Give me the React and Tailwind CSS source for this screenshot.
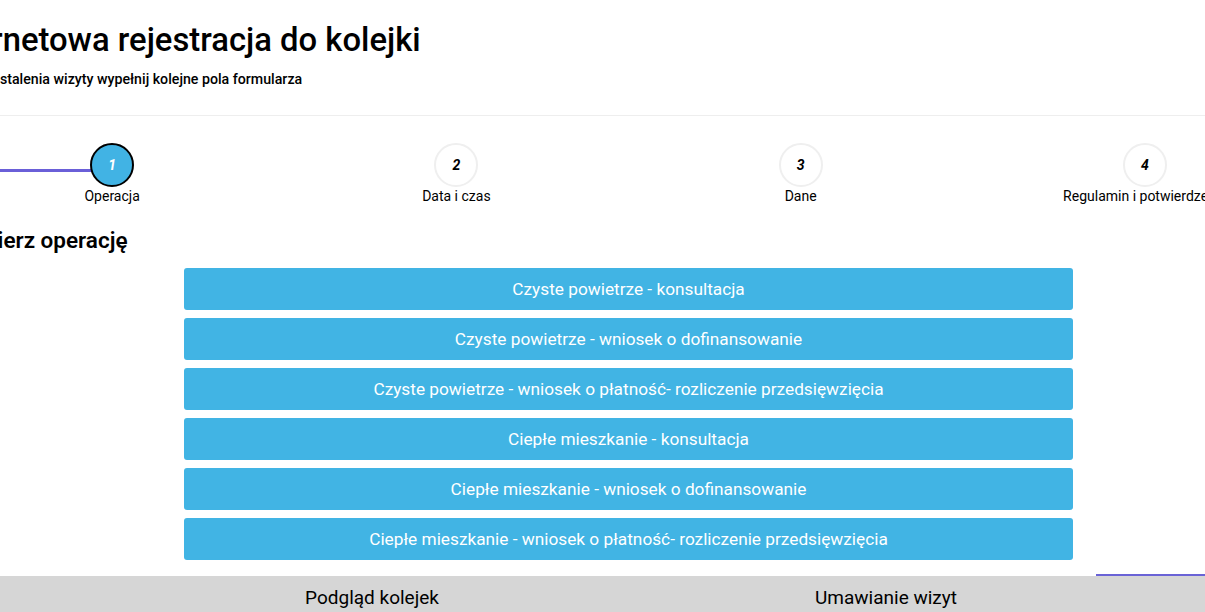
import React from 'react';

const steps = [
  { n: 1, label: 'Operacja', active: true },
  { n: 2, label: 'Data i czas' },
  { n: 3, label: 'Dane' },
  { n: 4, label: 'Regulamin i potwierdzenie' },
];

const operations = [
  'Czyste powietrze - konsultacja',
  'Czyste powietrze - wniosek o dofinansowanie',
  'Czyste powietrze - wniosek o płatność- rozliczenie przedsięwzięcia',
  'Ciepłe mieszkanie - konsultacja',
  'Ciepłe mieszkanie - wniosek o dofinansowanie',
  'Ciepłe mieszkanie - wniosek o płatność- rozliczenie przedsięwzięcia',
];

export default function App() {
  return (
    <div className="w-[1205px] h-[612px] overflow-hidden bg-white font-['Roboto',sans-serif] text-black">
      <div className="ml-[-60px] w-[1377px]">
        {/* header */}
        <div className="pt-[20px] pb-[27px] border-b border-[#eeeeee]">
          <h1 className="ml-[-5px] text-[32.8px] leading-[40px] font-medium whitespace-nowrap">Internetowa rejestracja do kolejki</h1>
          <p className="mt-[10px] pl-[6px] text-[14.2px] leading-[18px] font-medium">W celu ustalenia wizyty wypełnij kolejne pola formularza</p>
        </div>

        {/* stepper */}
        <div className="relative grid grid-cols-4 pt-[27px]">
          <div className="absolute left-0 top-[53px] w-[152px] h-[3px] bg-[#6a5fd8]" />
          {steps.map((s) => (
            <div key={s.n} className="relative flex flex-col items-center">
              <div
                className={
                  s.active
                    ? 'w-[44px] h-[44px] rounded-full border-2 border-black bg-[#41b3e4] flex items-center justify-center text-white text-[14px] font-bold italic'
                    : 'w-[44px] h-[44px] rounded-full border-2 border-[#efefef] bg-white flex items-center justify-center text-black text-[14px] font-bold italic'
                }
              >
                {s.n}
              </div>
              <span className="text-[14px] leading-[18px] whitespace-nowrap">{s.label}</span>
            </div>
          ))}
        </div>

        {/* operations */}
        <h2 className="mt-[22px] pl-[14px] text-[22.5px] leading-[26px] font-semibold">Wybierz operację</h2>
        <div className="mt-[15px] w-[889px] mx-auto flex flex-col gap-[8px]">
          {operations.map((op) => (
            <button
              key={op}
              className="h-[42px] w-full rounded-[3px] bg-[#41b4e4] text-white text-[17.25px] leading-[42px] text-center"
            >
              {op}
            </button>
          ))}
        </div>
      </div>

      {/* bottom tabs */}
      <div className="mt-[14px] ml-[1096px] h-[2px] bg-[#6a63d6]" />
      <div className="h-[40px] bg-[#d6d6d6] flex">
        <div className="ml-[115px] w-[514px] text-center text-[19px] leading-[44px]">Podgląd kolejek</div>
        <div className="w-[514px] text-center text-[19px] leading-[44px]">Umawianie wizyt</div>
      </div>
    </div>
  );
}
